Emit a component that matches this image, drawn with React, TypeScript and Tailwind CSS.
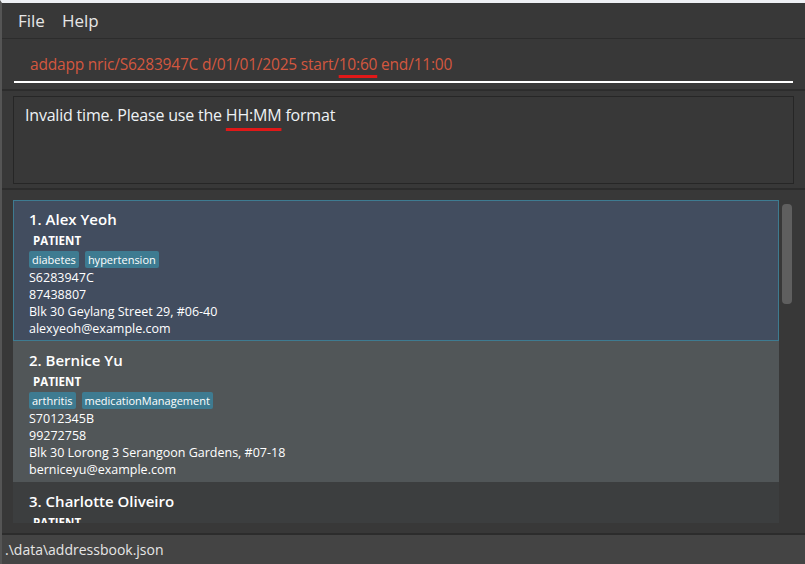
import React from "react";

type Person = {
  name: string;
  tags: string[];
  nric: string;
  phone: string;
  address: string;
  email: string;
};

const people: Person[] = [
  {
    name: "Alex Yeoh",
    tags: ["diabetes", "hypertension"],
    nric: "S6283947C",
    phone: "87438807",
    address: "Blk 30 Geylang Street 29, #06-40",
    email: "alexyeoh@example.com",
  },
  {
    name: "Bernice Yu",
    tags: ["arthritis", "medicationManagement"],
    nric: "S7012345B",
    phone: "99272758",
    address: "Blk 30 Lorong 3 Serangoon Gardens, #07-18",
    email: "berniceyu@example.com",
  },
  {
    name: "Charlotte Oliveiro",
    tags: ["asthma"],
    nric: "S8123456D",
    phone: "93210283",
    address: "Blk 11 Ang Mo Kio Street 74, #11-04",
    email: "charlotte@example.com",
  },
];

const font = { fontFamily: '"Open Sans", "Noto Sans", sans-serif' };

function Card({ p, i }: { p: Person; i: number }) {
  const bg =
    i === 0
      ? "bg-[#424d5f] border border-[#3e7b91]"
      : i === 1
      ? "bg-[#515658] border border-transparent"
      : "bg-[#3c3e3f] border border-transparent";
  return (
    <div className={`${bg} h-[141px] shrink-0 pl-[15px] pt-[7px] text-white`}>
      <div className="text-[15px] font-semibold leading-[22px]">
        {i + 1}. {p.name}
      </div>
      <div className="text-[11.5px] font-bold leading-[16px] pl-[4px] mt-[3px]">PATIENT</div>
      <div className="flex gap-[6px] mt-[2px]">
        {p.tags.map((t) => (
          <span
            key={t}
            className="bg-[#3e7b91] rounded-[2px] px-[3px] text-[11px] leading-[17px] text-white"
          >
            {t}
          </span>
        ))}
      </div>
      <div className="text-[12.5px] leading-[17px] mt-[1px]">
        <div>{p.nric}</div>
        <div>{p.phone}</div>
        <div>{p.address}</div>
        <div>{p.email}</div>
      </div>
    </div>
  );
}

export default function App() {
  return (
    <div
      className="w-[805px] h-[564px] bg-[#383838] flex flex-col overflow-hidden border-t-[3px] border-t-[#eef0f4] border-l-2 border-l-[#555]"
      style={font}
    >
      {/* Menu bar */}
      <div className="h-[35px] shrink-0 flex items-center gap-[17px] pl-[16px] text-[17px] text-[#e6e6e6]">
        <span>File</span>
        <span>Help</span>
      </div>
      {/* Command box */}
      <div className="h-[51px] shrink-0 border-t border-[#2c2c2c] px-[12px] pt-[12px]">
        <div className="border-b-2 border-white h-[32px] pl-[16px] text-[15.5px] tracking-[-0.2px] leading-[26px] text-[#d3573f]">
          addapp nric/S6283947C d/01/01/2025 start/
          <span className="underline decoration-[#e01818] decoration-[3px] underline-offset-[5px]">
            10:60
          </span>{" "}
          end/11:00
        </div>
      </div>
      <div className="h-[2px] shrink-0 bg-[#2c2c2c]" />
      {/* Result display */}
      <div className="h-[97px] shrink-0 px-[11px] pt-[5px] pb-[4px]">
        <div className="h-full border border-[#262626] pl-[11px] pt-[7px] text-[16px] tracking-[-0.2px] leading-[22px] text-[#eef2f5]">
          Invalid time. Please use the{" "}
          <span className="underline decoration-[#e01818] decoration-[3px] underline-offset-[7px]">
            HH:MM
          </span>{" "}
          format
        </div>
      </div>
      <div className="h-[2px] shrink-0 bg-[#2c2c2c]" />
      {/* List */}
      <div className="flex-1 min-h-0 flex pl-[11px] pt-[10px] pb-[10px] pr-[13px]">
        <div className="flex-1 min-w-0 overflow-hidden flex flex-col">
          {people.map((p, i) => (
            <Card key={p.name} p={p} i={i} />
          ))}
        </div>
        <div className="w-[13px] pl-[3px] pt-[4px]">
          <div className="w-[10px] h-[100px] rounded-[4px] bg-[#5f5f5f]" />
        </div>
      </div>
      {/* Status bar */}
      <div className="h-[31px] shrink-0 bg-[#444444] border-t-2 border-[#2c2c2c] pl-[3px] flex items-center text-[14px] text-[#e6e6e6]">
        .\data\addressbook.json
      </div>
    </div>
  );
}
